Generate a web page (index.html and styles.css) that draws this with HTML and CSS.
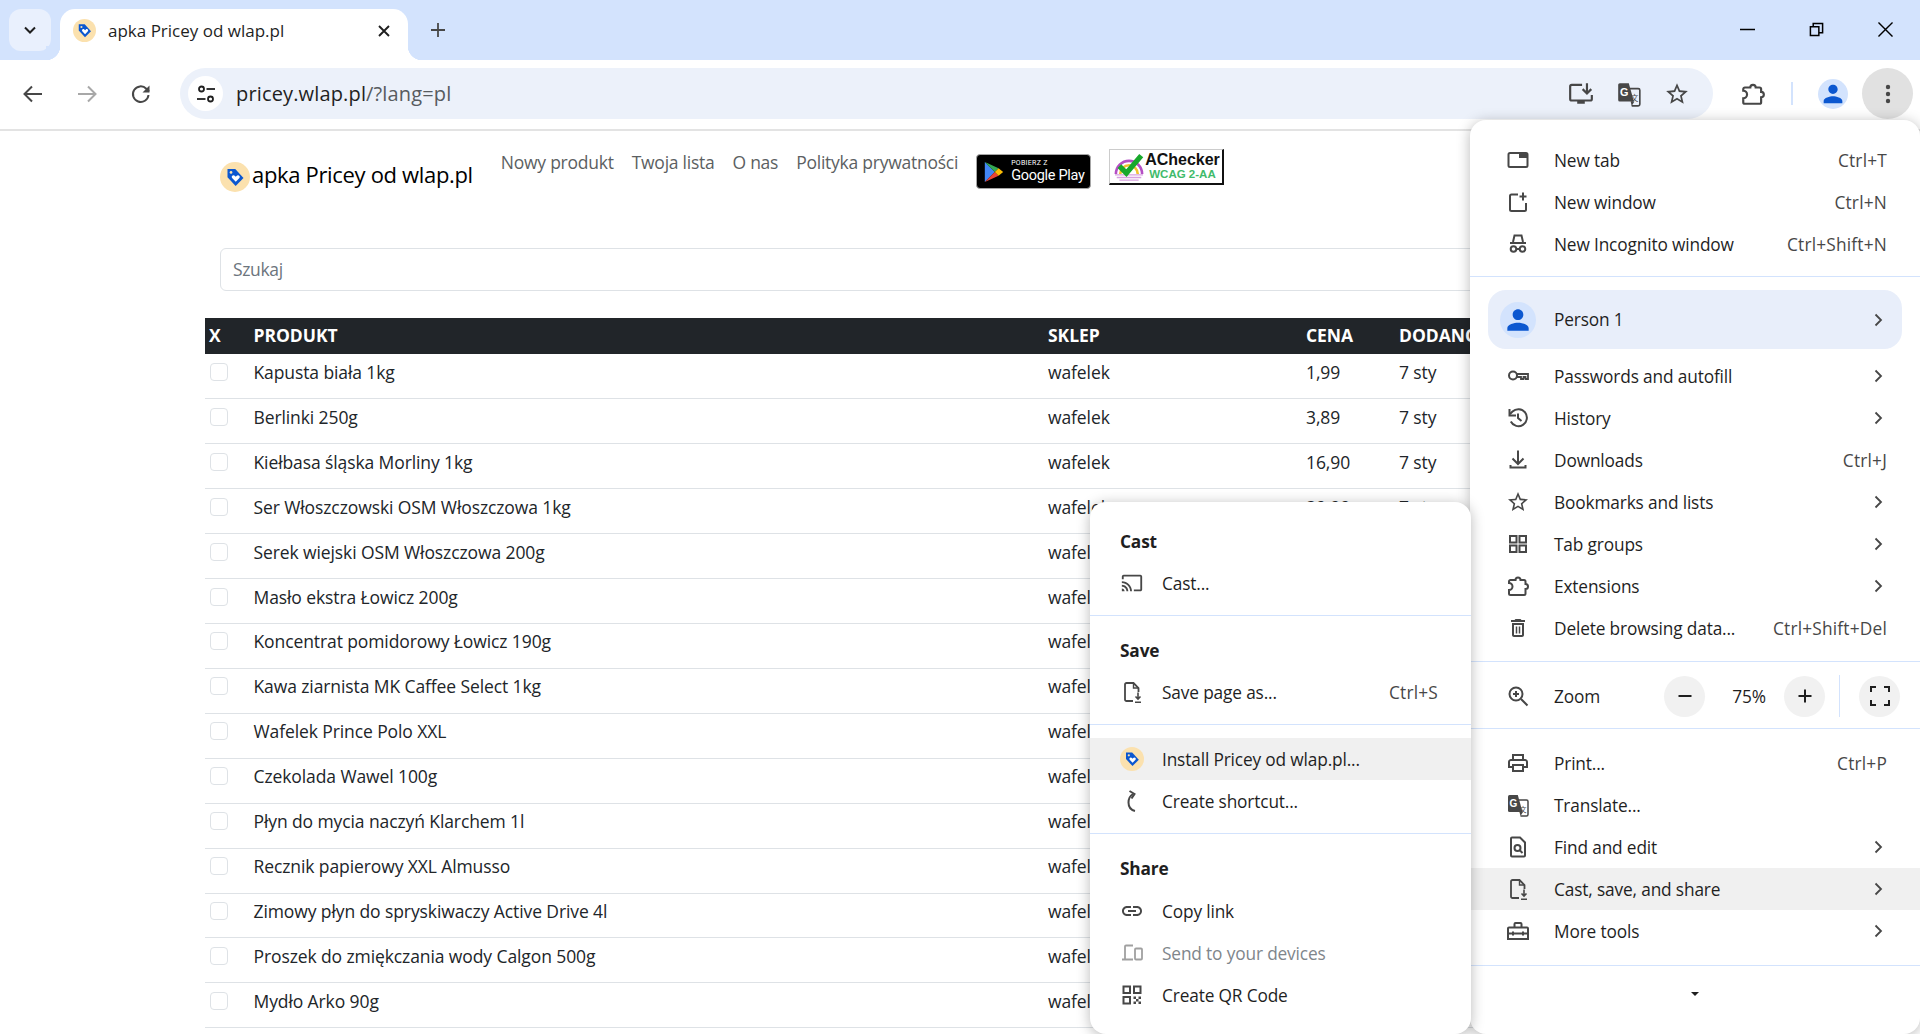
FILE: index.html
```html
<!DOCTYPE html>
<html lang="pl">
<head>
    <meta charset="UTF-8">
    <meta name="viewport" content="width=device-width, initial-scale=1.0">
    <title>apka Pricey od wlap.pl</title>
    <link rel="stylesheet" href="styles.css">
</head>
<body>
    <!-- Ikony -->
    <svg class="sprite" aria-hidden="true">
        <symbol id="i-favicon" viewBox="0 0 24 24">
            <circle cx="12" cy="12" r="12" fill="#fbe1ae"/>
            <path d="M6 5.500h6.200l6.600 7.200-6.300 6.400-6.500-7z" fill="#0b57d0"/>
            <circle cx="8.800" cy="8.300" r="1.100" fill="#fbe1ae"/>
            <path d="M12.600 15.800l-2.900-3c-1.200-1.500 1-3.100 2.300-1.700l.6.6.6-.6c1.300-1.400 3.500.2 2.300 1.700z" fill="#fff"/>
        </symbol>
        <symbol id="i-person" viewBox="0 0 24 24">
            <path d="M12 12c2.210 0 4-1.790 4-4s-1.790-4-4-4-4 1.790-4 4 1.790 4 4 4zm0 2c-2.670 0-8 1.340-8 4v2h16v-2c0-2.660-5.330-4-8-4z" fill="#0b57d0"/>
        </symbol>
        <symbol id="i-star" viewBox="0 0 24 24">
            <path d="M22 9.240l-7.190-.62L12 2 9.190 8.630 2 9.240l5.460 4.730L5.820 21 12 17.270 18.180 21l-1.630-7.030L22 9.240zM12 15.400l-3.760 2.270 1-4.280-3.320-2.880 4.380-.38L12 6.100l1.710 4.040 4.380.38-3.320 2.880 1 4.280L12 15.400z" fill="currentColor"/>
        </symbol>
        <symbol id="i-ext" viewBox="0 0 24 24">
            <path d="M4.500 6h5a2.500 2.500 0 0 1 5 0H18a1.500 1.500 0 0 1 1.500 1.500V10a2.500 2.500 0 0 1 0 5v4.500A1.500 1.500 0 0 1 18 21H4.500A1.500 1.500 0 0 1 3 19.500V16a3.500 3.500 0 0 0 0-7V7.500A1.500 1.500 0 0 1 4.500 6z" fill="none" stroke="currentColor" stroke-width="2"/>
        </symbol>
        <symbol id="i-save" viewBox="0 0 24 24">
            <path d="M13 21H6.500A1.500 1.500 0 0 1 5 19.500v-15A1.500 1.500 0 0 1 6.500 3h7l5 5v4" fill="none" stroke="currentColor" stroke-width="1.800"/>
            <path d="M13.500 3v5h5" fill="none" stroke="currentColor" stroke-width="1.400"/>
            <path d="M18 12.500v6M15.500 16.500l2.500 2.500 2.500-2.500M15 22.300h6" fill="none" stroke="currentColor" stroke-width="1.600"/>
        </symbol>
        <symbol id="i-chevron" viewBox="0 0 16 16">
            <path d="M5.500 2.500L11 8l-5.500 5.500" fill="none" stroke="#474747" stroke-width="1.800"/>
        </symbol>
    </svg>

    <div class="browser">
        <!-- Pasek kart -->
        <header class="tabstrip">
            <button class="tab-search">
                <svg class="icon-16" viewBox="0 0 16 16"><path d="M3 5.500l5 5 5-5" fill="none" stroke="#1f1f1f" stroke-width="2"/></svg>
            </button>
            <div class="tab">
                <svg class="tab-favicon"><use href="#i-favicon"/></svg>
                <span class="tab-title">apka Pricey od wlap.pl</span>
                <svg class="icon-16" viewBox="0 0 16 16"><path d="M3 3l10 10M13 3L3 13" fill="none" stroke="#1f1f1f" stroke-width="1.900"/></svg>
            </div>
            <svg class="new-tab" viewBox="0 0 16 16"><path d="M8 1v14M1 8h14" fill="none" stroke="#474747" stroke-width="1.800"/></svg>
            <div class="window-controls">
                <svg class="win-btn" viewBox="0 0 16 16"><path d="M0 8h16" stroke="#000" stroke-width="1.600"/></svg>
                <svg class="win-btn" viewBox="0 0 16 16"><path d="M1.500 5h9v9.500h-9zM4.500 5V1.500h10v10H10.500" fill="none" stroke="#000" stroke-width="1.600"/></svg>
                <svg class="win-btn" viewBox="0 0 16 16"><path d="M.5.5l15 15M15.500.5l-15 15" fill="none" stroke="#000" stroke-width="1.500"/></svg>
            </div>
        </header>

        <!-- Pasek adresu -->
        <nav class="toolbar">
            <div class="nav-buttons">
                <svg class="icon-24" viewBox="0 0 24 24"><path d="M21 12H4M11 4.500L3.500 12l7.500 7.500" fill="none" stroke="#474747" stroke-width="2"/></svg>
                <svg class="icon-24" viewBox="0 0 24 24"><path d="M3 12h17M13 4.500l7.500 7.500-7.500 7.500" fill="none" stroke="#a8a8a8" stroke-width="2"/></svg>
                <svg class="icon-24" viewBox="0 0 24 24"><path d="M19.500 13a7.800 7.800 0 1 1-2.200-6.300L20 9.500" fill="none" stroke="#474747" stroke-width="2"/><path d="M20.500 3.500v7h-7z" fill="#474747"/></svg>
            </div>
            <div class="omnibox">
                <span class="site-chip">
                    <svg class="icon-20" viewBox="0 0 20 20">
                        <g fill="none" stroke="#1f1f1f" stroke-width="1.800">
                            <circle cx="5.500" cy="5" r="2.500"/><path d="M10.500 5H19"/>
                            <circle cx="14.500" cy="15" r="2.500"/><path d="M1 15h8.500"/>
                        </g>
                    </svg>
                </span>
                <span class="url">pricey.wlap.pl<span class="url-rest">/?lang=pl</span></span>
                <div class="omni-icons">
                    <svg class="icon-26" viewBox="0 0 24 24">
                        <path d="M13 3.500H3.500A1.500 1.500 0 0 0 2 5v11.500A1.500 1.500 0 0 0 3.500 18h17a1.500 1.500 0 0 0 1.500-1.500V13" fill="none" stroke="#474747" stroke-width="2"/>
                        <path d="M8.500 18h7v3h-7z" fill="#474747"/>
                        <path d="M17.500 2v9M13.500 7.500l4 4 4-4" fill="none" stroke="#474747" stroke-width="2"/>
                    </svg>
                    <svg class="icon-26 icon-dark" viewBox="0 0 24 24">
                        <path d="M3.500 2h8.300l4.700 17H3.500A1.500 1.500 0 0 1 2 17.500v-14A1.500 1.500 0 0 1 3.500 2z" fill="currentColor"/>
                        <path d="M12 7h8.500A1.500 1.500 0 0 1 22 8.500v13a1.500 1.500 0 0 1-1.500 1.500H14.500" fill="none" stroke="currentColor" stroke-width="1.500"/>
                        <path d="M13.500 19l1 4 2.500-4z" fill="currentColor"/>
                        <text x="3.600" y="14" class="svg-g">G</text>
                        <text x="13.600" y="18.500" class="svg-cjk">文</text>
                    </svg>
                    <svg class="icon-26 icon-dark"><use href="#i-star"/></svg>
                </div>
            </div>
            <svg class="icon-26 icon-dark toolbar-ext"><use href="#i-ext"/></svg>
            <span class="toolbar-sep"></span>
            <span class="avatar"><svg class="avatar-person"><use href="#i-person"/></svg></span>
            <span class="kebab">
                <svg class="icon-24" viewBox="0 0 24 24"><g fill="#474747"><circle cx="12" cy="5" r="2.200"/><circle cx="12" cy="12" r="2.200"/><circle cx="12" cy="19" r="2.200"/></g></svg>
            </span>
        </nav>

        <!-- Strona -->
        <main class="page">
            <div class="page-header">
                <svg class="logo"><use href="#i-favicon"/></svg>
                <span class="brand">apka Pricey od wlap.pl</span>
                <a class="nav-link" href="#">Nowy produkt</a>
                <a class="nav-link" href="#">Twoja lista</a>
                <a class="nav-link" href="#">O nas</a>
                <a class="nav-link" href="#">Polityka prywatności</a>
                <a class="play-badge" href="#">
                    <svg class="play-icon" viewBox="0 0 24 26">
                        <path d="M1 1v24l12-12z" fill="#4285f4"/>
                        <path d="M1 1l12 12 4.500-4.500z" fill="#34a853"/>
                        <path d="M1 25l12-12 4.500 4.500z" fill="#ea4335"/>
                        <path d="M17.500 8.500L23 13l-5.500 4.500L13 13z" fill="#fbbc04"/>
                    </svg>
                    <span class="play-text">
                        <span class="play-small">POBIERZ Z</span>
                        <span class="play-big">Google Play</span>
                    </span>
                </a>
                <a class="checker-badge" href="#">
                    <svg class="checker-icon" viewBox="0 0 36 32">
                        <path d="M3 24a15 15 0 0 1 30 0" fill="none" stroke="#b44fc4" stroke-width="3"/>
                        <path d="M8 24a10 10 0 0 1 20 0" fill="none" stroke="#f2c230" stroke-width="3"/>
                        <path d="M2 25h32M4 28h28M7 31h22" stroke="#d8a0e0" stroke-width="1.500"/>
                        <path d="M7 15l8 8L32 3" fill="none" stroke="#18a82c" stroke-width="6"/>
                    </svg>
                    <span class="checker-text">
                        <span class="checker-name">AChecker</span>
                        <span class="checker-level">WCAG 2-AA</span>
                    </span>
                </a>
            </div>

            <input class="search" type="text" placeholder="Szukaj">

            <table class="products">
                <colgroup>
                    <col class="col-x"><col class="col-name"><col class="col-shop"><col class="col-price"><col class="col-date">
                </colgroup>
                <thead>
                    <tr><th>X</th><th>PRODUKT</th><th>SKLEP</th><th>CENA</th><th>DODANO</th></tr>
                </thead>
                <tbody>
                    <tr><td><span class="check"></span></td><td>Kapusta biała 1kg</td><td>wafelek</td><td>1,99</td><td>7 sty</td></tr>
                    <tr><td><span class="check"></span></td><td>Berlinki 250g</td><td>wafelek</td><td>3,89</td><td>7 sty</td></tr>
                    <tr><td><span class="check"></span></td><td>Kiełbasa śląska Morliny 1kg</td><td>wafelek</td><td>16,90</td><td>7 sty</td></tr>
                    <tr><td><span class="check"></span></td><td>Ser Włoszczowski OSM Włoszczowa 1kg</td><td>wafelek</td><td>39,99</td><td>7 sty</td></tr>
                    <tr><td><span class="check"></span></td><td>Serek wiejski OSM Włoszczowa 200g</td><td>wafelek</td><td>2,49</td><td>7 sty</td></tr>
                    <tr><td><span class="check"></span></td><td>Masło ekstra Łowicz 200g</td><td>wafelek</td><td>6,99</td><td>7 sty</td></tr>
                    <tr><td><span class="check"></span></td><td>Koncentrat pomidorowy Łowicz 190g</td><td>wafelek</td><td>4,49</td><td>7 sty</td></tr>
                    <tr><td><span class="check"></span></td><td>Kawa ziarnista MK Caffee Select 1kg</td><td>wafelek</td><td>59,99</td><td>7 sty</td></tr>
                    <tr><td><span class="check"></span></td><td>Wafelek Prince Polo XXL</td><td>wafelek</td><td>1,49</td><td>7 sty</td></tr>
                    <tr><td><span class="check"></span></td><td>Czekolada Wawel 100g</td><td>wafelek</td><td>4,29</td><td>7 sty</td></tr>
                    <tr><td><span class="check"></span></td><td>Płyn do mycia naczyń Klarchem 1l</td><td>wafelek</td><td>5,99</td><td>7 sty</td></tr>
                    <tr><td><span class="check"></span></td><td>Recznik papierowy XXL Almusso</td><td>wafelek</td><td>7,99</td><td>7 sty</td></tr>
                    <tr><td><span class="check"></span></td><td>Zimowy płyn do spryskiwaczy Active Drive 4l</td><td>wafelek</td><td>19,99</td><td>7 sty</td></tr>
                    <tr><td><span class="check"></span></td><td>Proszek do zmiękczania wody Calgon 500g</td><td>wafelek</td><td>12,99</td><td>7 sty</td></tr>
                    <tr><td><span class="check"></span></td><td>Mydło Arko 90g</td><td>wafelek</td><td>2,99</td><td>7 sty</td></tr>
                </tbody>
            </table>
        </main>
    </div>

    <!-- Menu Chrome -->
    <div class="menu main-menu">
        <div class="menu-item">
            <svg class="menu-icon" viewBox="0 0 24 24"><rect x="2.500" y="5" width="19" height="14" rx="1.500" fill="none" stroke="currentColor" stroke-width="2"/><path d="M13 5h8.500v5H13z" fill="currentColor"/></svg>
            <span class="menu-label">New tab</span><span class="accel">Ctrl+T</span>
        </div>
        <div class="menu-item">
            <svg class="menu-icon" viewBox="0 0 24 24"><path d="M12 4.500H5.500A1.500 1.500 0 0 0 4 6v13.500A1.500 1.500 0 0 0 5.500 21h13a1.500 1.500 0 0 0 1.500-1.500V13" fill="none" stroke="currentColor" stroke-width="2"/><path d="M17 2.500v8M13.500 6.500h7" fill="none" stroke="currentColor" stroke-width="2"/></svg>
            <span class="menu-label">New window</span><span class="accel">Ctrl+N</span>
        </div>
        <div class="menu-item">
            <svg class="menu-icon" viewBox="0 0 24 24"><path d="M7 10l1.500-6.500h7L17 10M4 11h16" fill="none" stroke="currentColor" stroke-width="2"/><circle cx="7.500" cy="17" r="2.800" fill="none" stroke="currentColor" stroke-width="2"/><circle cx="16.500" cy="17" r="2.800" fill="none" stroke="currentColor" stroke-width="2"/><path d="M10.500 17h3" stroke="currentColor" stroke-width="2"/></svg>
            <span class="menu-label">New Incognito window</span><span class="accel">Ctrl+Shift+N</span>
        </div>
        <div class="menu-sep sep-first"></div>
        <div class="person-pill">
            <span class="person-avatar"><svg class="person-large"><use href="#i-person"/></svg></span>
            <span class="menu-label">Person 1</span>
            <svg class="chevron"><use href="#i-chevron"/></svg>
        </div>
        <div class="menu-item item-after-person">
            <svg class="menu-icon" viewBox="0 0 24 24"><circle cx="7" cy="11.500" r="4" fill="none" stroke="currentColor" stroke-width="2"/><path d="M11 10h11v5h-2.500v-2h-2v2H15v-2h-4" fill="none" stroke="currentColor" stroke-width="1.800"/></svg>
            <span class="menu-label">Passwords and autofill</span>
            <svg class="chevron"><use href="#i-chevron"/></svg>
        </div>
        <div class="menu-item">
            <svg class="menu-icon" viewBox="0 0 24 24"><path d="M4.800 15.500A8.500 8.500 0 1 0 6.500 5.500L4 8" fill="none" stroke="currentColor" stroke-width="2"/><path d="M3.500 3v6.500H10" fill="none" stroke="currentColor" stroke-width="2"/><path d="M12 7.500V12l3.500 3" fill="none" stroke="currentColor" stroke-width="2"/></svg>
            <span class="menu-label">History</span>
            <svg class="chevron"><use href="#i-chevron"/></svg>
        </div>
        <div class="menu-item">
            <svg class="menu-icon" viewBox="0 0 24 24"><path d="M12 2.500v13M6.500 10.500l5.500 5.500 5.500-5.500" fill="none" stroke="currentColor" stroke-width="2"/><path d="M4.500 17v2.500h15V17" fill="none" stroke="currentColor" stroke-width="2"/></svg>
            <span class="menu-label">Downloads</span><span class="accel">Ctrl+J</span>
        </div>
        <div class="menu-item">
            <svg class="menu-icon"><use href="#i-star"/></svg>
            <span class="menu-label">Bookmarks and lists</span>
            <svg class="chevron"><use href="#i-chevron"/></svg>
        </div>
        <div class="menu-item">
            <svg class="menu-icon" viewBox="0 0 24 24"><g fill="none" stroke="currentColor" stroke-width="2"><rect x="4" y="4" width="6.500" height="6.500"/><rect x="13.500" y="4" width="6.500" height="6.500"/><rect x="4" y="13.500" width="6.500" height="6.500"/><rect x="13.500" y="13.500" width="6.500" height="6.500"/></g></svg>
            <span class="menu-label">Tab groups</span>
            <svg class="chevron"><use href="#i-chevron"/></svg>
        </div>
        <div class="menu-item">
            <svg class="menu-icon"><use href="#i-ext"/></svg>
            <span class="menu-label">Extensions</span>
            <svg class="chevron"><use href="#i-chevron"/></svg>
        </div>
        <div class="menu-item">
            <svg class="menu-icon" viewBox="0 0 24 24"><path d="M6 19c0 1.100.9 2 2 2h8c1.100 0 2-.9 2-2V7H6v12zM8 9h8v10H8V9zm7.500-5l-1-1h-5l-1 1H5v2h14V4z" fill="currentColor"/><path d="M10.500 10.500v7M13.500 10.500v7" stroke="currentColor" stroke-width="1.500"/></svg>
            <span class="menu-label">Delete browsing data...</span><span class="accel">Ctrl+Shift+Del</span>
        </div>
        <div class="menu-sep sep-zoom"></div>
        <div class="zoom-row">
            <svg class="menu-icon" viewBox="0 0 24 24"><circle cx="10" cy="10" r="6.500" fill="none" stroke="currentColor" stroke-width="2"/><path d="M15 15l6.500 6.500M10 7v6M7 10h6" fill="none" stroke="currentColor" stroke-width="2"/></svg>
            <span class="menu-label">Zoom</span>
            <span class="zoom-btn"><svg class="icon-16" viewBox="0 0 16 16"><path d="M1.500 8h13" stroke="#1f1f1f" stroke-width="2"/></svg></span>
            <span class="zoom-value">75%</span>
            <span class="zoom-btn"><svg class="icon-16" viewBox="0 0 16 16"><path d="M1.500 8h13M8 1.500v13" stroke="#1f1f1f" stroke-width="2"/></svg></span>
            <span class="zoom-sep"></span>
            <span class="zoom-btn"><svg class="icon-20" viewBox="0 0 20 20"><path d="M1 6V1h5M14 1h5v5M19 14v5h-5M6 19H1v-5" fill="none" stroke="#1f1f1f" stroke-width="2"/></svg></span>
        </div>
        <div class="menu-sep sep-print"></div>
        <div class="menu-item">
            <svg class="menu-icon" viewBox="0 0 24 24"><path d="M19 8h-1V3H6v5H5c-1.660 0-3 1.340-3 3v6h4v4h12v-4h4v-6c0-1.660-1.340-3-3-3zM8 5h8v3H8V5zm8 12v2H8v-4h8v2zm2-2v-2H6v2H4v-4c0-.55.45-1 1-1h14c.55 0 1 .45 1 1v4h-2z" fill="currentColor"/></svg>
            <span class="menu-label">Print...</span><span class="accel">Ctrl+P</span>
        </div>
        <div class="menu-item">
            <svg class="menu-icon" viewBox="0 0 24 24">
                <path d="M3.500 2h8.300l4.700 17H3.500A1.500 1.500 0 0 1 2 17.500v-14A1.500 1.500 0 0 1 3.500 2z" fill="currentColor"/>
                <path d="M12 7h8.500A1.500 1.500 0 0 1 22 8.500v13a1.500 1.500 0 0 1-1.500 1.500H14.500" fill="none" stroke="currentColor" stroke-width="1.500"/>
                <path d="M13.500 19l1 4 2.500-4z" fill="currentColor"/>
                <text x="3.600" y="14" class="svg-g">G</text>
                <text x="13.600" y="18.500" class="svg-cjk">文</text>
            </svg>
            <span class="menu-label">Translate...</span>
        </div>
        <div class="menu-item">
            <svg class="menu-icon" viewBox="0 0 24 24"><path d="M6 2.500h8l5 5v13a1 1 0 0 1-1 1H6a1 1 0 0 1-1-1v-17a1 1 0 0 1 1-1z" fill="none" stroke="currentColor" stroke-width="2"/><circle cx="11.500" cy="13" r="3" fill="none" stroke="currentColor" stroke-width="2"/><path d="M13.500 15l3 3" stroke="currentColor" stroke-width="2"/></svg>
            <span class="menu-label">Find and edit</span>
            <svg class="chevron"><use href="#i-chevron"/></svg>
        </div>
        <div class="menu-item is-active">
            <svg class="menu-icon"><use href="#i-save"/></svg>
            <span class="menu-label">Cast, save, and share</span>
            <svg class="chevron"><use href="#i-chevron"/></svg>
        </div>
        <div class="menu-item">
            <svg class="menu-icon" viewBox="0 0 24 24"><path d="M3 8.500h18a1 1 0 0 1 1 1V20H2V9.500a1 1 0 0 1 1-1zM8.500 8V5a1 1 0 0 1 1-1h5a1 1 0 0 1 1 1v3M2 14.500h20M7 12.500v4M17 12.500v4" fill="none" stroke="currentColor" stroke-width="2"/></svg>
            <span class="menu-label">More tools</span>
            <svg class="chevron"><use href="#i-chevron"/></svg>
        </div>
        <div class="menu-sep sep-more"></div>
        <div class="menu-more"><span class="caret"></span></div>
    </div>

    <div class="menu sub-menu">
        <div class="menu-heading">Cast</div>
        <div class="menu-item">
            <svg class="menu-icon" viewBox="-1 -1 26 26"><path d="M21 3H3c-1.100 0-2 .9-2 2v3h2V5h18v14h-7v2h7c1.100 0 2-.9 2-2V5c0-1.100-.9-2-2-2zM1 18v3h3c0-1.660-1.340-3-3-3zm0-4v2c2.760 0 5 2.240 5 5h2c0-3.870-3.130-7-7-7zm0-4v2c4.970 0 9 4.030 9 9h2c0-6.080-4.930-11-11-11z" fill="currentColor"/></svg>
            <span class="menu-label">Cast...</span>
        </div>
        <div class="menu-sep sep-a"></div>
        <div class="menu-heading">Save</div>
        <div class="menu-item">
            <svg class="menu-icon"><use href="#i-save"/></svg>
            <span class="menu-label">Save page as...</span><span class="accel">Ctrl+S</span>
        </div>
        <div class="menu-sep sep-a"></div>
        <div class="menu-item is-active item-install">
            <svg class="menu-icon"><use href="#i-favicon"/></svg>
            <span class="menu-label">Install Pricey od wlap.pl...</span>
        </div>
        <div class="menu-item">
            <svg class="menu-icon" viewBox="0 0 24 24"><path d="M15 22c-4-1-6.500-4.500-6.500-8.500S10.500 6.500 13 5" fill="none" stroke="currentColor" stroke-width="2"/><path d="M9.500 2l5 3-3 4.500" fill="none" stroke="currentColor" stroke-width="2"/></svg>
            <span class="menu-label">Create shortcut...</span>
        </div>
        <div class="menu-sep sep-a"></div>
        <div class="menu-heading heading-share">Share</div>
        <div class="menu-item">
            <svg class="menu-icon" viewBox="0 0 24 24"><path d="M3.900 12c0-1.710 1.390-3.100 3.100-3.100h4V7H7c-2.760 0-5 2.240-5 5s2.240 5 5 5h4v-1.900H7c-1.710 0-3.100-1.390-3.100-3.100zM8 13h8v-2H8v2zm9-6h-4v1.900h4c1.710 0 3.100 1.390 3.100 3.100s-1.390 3.100-3.100 3.100h-4V17h4c2.760 0 5-2.240 5-5s-2.240-5-5-5z" fill="currentColor"/></svg>
            <span class="menu-label">Copy link</span>
        </div>
        <div class="menu-item is-muted">
            <svg class="menu-icon" viewBox="0 0 24 24"><path d="M13 4.500H6a1 1 0 0 0-1 1V18M2 18.500h11" fill="none" stroke="currentColor" stroke-width="1.800"/><rect x="15" y="7.500" width="7" height="11" rx="1" fill="none" stroke="currentColor" stroke-width="1.800"/></svg>
            <span class="menu-label">Send to your devices</span>
        </div>
        <div class="menu-item">
            <svg class="menu-icon" viewBox="0 0 24 24"><g fill="none" stroke="currentColor" stroke-width="2"><rect x="3.500" y="3.500" width="6.500" height="6.500"/><rect x="14" y="3.500" width="6.500" height="6.500"/><rect x="3.500" y="14" width="6.500" height="6.500"/></g><path d="M13.500 13.500h2.500V16h-2.500zM18.500 13.500H21V16h-2.500zM16 16h2.500v2.500H16zM13.500 18.500H16V21h-2.500zM18.500 18.500H21V21h-2.500z" fill="currentColor"/></svg>
            <span class="menu-label">Create QR Code</span>
        </div>
    </div>
</body>
</html>
```

FILE: styles.css
```css
* {
    box-sizing: border-box;
    margin: 0;
    padding: 0;
}

body {
    font-family: "Open Sans", "Noto Sans", sans-serif;
    color: #1f1f1f;
    background: #fff;
    height: 100vh;
    overflow: hidden;
    position: relative;
}

a {
    text-decoration: none;
}

svg {
    display: block;
    flex: none;
}

.sprite {
    width: 0;
    height: 0;
    position: absolute;
}

.svg-g {
    font: 700 10px "Liberation Sans", sans-serif;
    fill: #fff;
}

.svg-cjk {
    font: 7px "Noto Sans CJK SC", sans-serif;
    fill: currentColor;
}

.icon-16 { width: 16px; height: 16px; }
.icon-20 { width: 20px; height: 20px; }
.icon-24 { width: 24px; height: 24px; }
.icon-26 { width: 26px; height: 26px; }
.icon-dark { color: #474747; }

.browser {
    height: 100%;
    display: flex;
    flex-direction: column;
}

/* Pasek kart */
.tabstrip {
    height: 60px;
    flex: none;
    background: #d3e3fd;
    display: flex;
    align-items: flex-start;
    padding: 9px 0 0 9px;
}

.tab-search {
    width: 42px;
    height: 42px;
    border: none;
    border-radius: 12px;
    background: #e9f0fd;
    display: flex;
    align-items: center;
    justify-content: center;
}

.tab {
    width: 348px;
    height: 51px;
    margin-left: 9px;
    background: #fff;
    border-radius: 15px 15px 0 0;
    display: flex;
    align-items: center;
    padding: 0 16px 8px 13px;
    position: relative;
}

.tab::before,
.tab::after {
    content: "";
    position: absolute;
    bottom: 0;
    width: 14px;
    height: 14px;
}

.tab::before {
    left: -14px;
    background: radial-gradient(circle at 0 0, #d3e3fd 14px, #fff 14.5px);
}

.tab::after {
    right: -14px;
    background: radial-gradient(circle at 100% 0, #d3e3fd 14px, #fff 14.5px);
}

.tab-favicon {
    width: 23px;
    height: 23px;
}

.tab-title {
    flex: 1;
    margin-left: 12px;
    font-size: 17px;
    color: #1f1f1f;
}

.new-tab {
    width: 16px;
    height: 16px;
    margin: 13px 0 0 22px;
}

.window-controls {
    margin-left: auto;
    display: flex;
    gap: 54px;
    padding: 13px 27px 0 0;
}

.win-btn {
    width: 15px;
    height: 15px;
}

/* Pasek adresu */
.toolbar {
    height: 71px;
    flex: none;
    background: #fff;
    border-bottom: 2px solid #e3e3e3;
    border-radius: 14px 14px 0 0;
    display: flex;
    align-items: center;
    padding: 0 7px 2px 21px;
    position: relative;
}

.nav-buttons {
    display: flex;
    gap: 30px;
}

.omnibox {
    width: 1533px;
    height: 51px;
    margin-left: 27px;
    background: #ecf1fa;
    border-radius: 26px;
    display: flex;
    align-items: center;
    padding: 0 23px 0 8px;
}

.site-chip {
    width: 35px;
    height: 35px;
    background: #fff;
    border-radius: 50%;
    display: flex;
    align-items: center;
    justify-content: center;
}

.url {
    margin-left: 13px;
    font-size: 20px;
    letter-spacing: 0.15px;
    color: #1f1f1f;
}

.url-rest {
    color: #575b5f;
}

.omni-icons {
    margin-left: auto;
    display: flex;
    gap: 22px;
}

.toolbar-ext {
    margin-left: 27px;
}

.toolbar-sep {
    width: 2px;
    height: 23px;
    margin-left: 25px;
    background: #d3e3fd;
}

.avatar {
    width: 30px;
    height: 30px;
    margin-left: 25px;
    border-radius: 50%;
    background: #d3e3fd;
    display: flex;
    align-items: center;
    justify-content: center;
}

.avatar-person {
    width: 28px;
    height: 28px;
}

.kebab {
    width: 51px;
    height: 51px;
    margin-left: 14px;
    border-radius: 50%;
    background: #e1e1e1;
    display: flex;
    align-items: center;
    justify-content: center;
}

/* Strona */
.page {
    flex: 1;
    padding-left: 205px;
    overflow: hidden;
}

.page-header {
    height: 117px;
    padding-left: 15px;
    display: flex;
    align-items: flex-start;
}

.logo {
    width: 30px;
    height: 30px;
    margin-top: 31px;
}

.brand {
    margin: 28px 28px 0 2px;
    font-size: 22px;
    line-height: 30px;
    letter-spacing: -0.33px;
    color: #000;
}

.nav-link {
    margin: 19px 18px 0 0;
    font-size: 17.500px;
    line-height: 24px;
    letter-spacing: -0.25px;
    color: #5c5f62;
}

.play-badge {
    width: 115px;
    height: 35px;
    margin-top: 23px;
    background: #000;
    border: 1px solid #a6a6a6;
    border-radius: 4px;
    display: flex;
    align-items: center;
    padding-left: 7px;
    color: #fff;
}

.play-icon {
    width: 20px;
    height: 24px;
}

.play-text {
    margin-left: 7px;
    display: flex;
    flex-direction: column;
    font-family: Roboto, sans-serif;
}

.play-small {
    font-size: 7px;
    line-height: 8px;
    letter-spacing: 0.3px;
}

.play-big {
    font-size: 14.500px;
    line-height: 17px;
    letter-spacing: -0.3px;
}

.checker-badge {
    width: 115px;
    height: 36px;
    margin: 18px 0 0 18px;
    background: #fff;
    border: 1px solid #ccc;
    border-right: 2px solid #111;
    border-bottom: 2px solid #111;
    display: flex;
    align-items: center;
    padding-left: 3px;
}

.checker-icon {
    width: 32px;
    height: 28px;
}

.checker-text {
    display: flex;
    flex-direction: column;
    align-items: center;
    font-family: "Liberation Sans", sans-serif;
    font-weight: 700;
}

.checker-name {
    font-size: 16px;
    line-height: 16px;
    color: #111;
}

.checker-level {
    font-size: 11.500px;
    line-height: 13px;
    color: #3fbb6b;
}

.search {
    display: block;
    width: 1480px;
    height: 43px;
    margin-left: 15px;
    padding: 0 12px 2px;
    border: 1px solid #dee2e6;
    border-radius: 6px;
    font-family: inherit;
    font-size: 17.500px;
    letter-spacing: -0.35px;
    outline: none;
}

.search::placeholder {
    color: #6c757d;
    opacity: 1;
}

.products {
    width: 1510px;
    margin-top: 27px;
    border-collapse: collapse;
    table-layout: fixed;
}

.col-x { width: 44.500px; }
.col-name { width: 794.500px; }
.col-shop { width: 258px; }
.col-price { width: 93px; }
.col-date { width: 320px; }

.products th {
    height: 36px;
    padding: 0 4px 3px;
    background: #212529;
    color: #fff;
    text-align: left;
    font-size: 17.500px;
    letter-spacing: -0.05px;
    font-weight: 700;
    white-space: nowrap;
}

.products td {
    height: 44.930px;
    padding: 0 4px 9px;
    border-bottom: 1px solid #dee2e6;
    font-size: 17.500px;
    letter-spacing: -0.1px;
    color: #212529;
    white-space: nowrap;
}

.check {
    display: block;
    width: 18px;
    height: 18px;
    margin-left: 1px;
    border: 1px solid #dee2e6;
    border-radius: 4px;
}

/* Menu */
.menu {
    position: absolute;
    bottom: 0;
    background: #fff;
    border-radius: 16px;
    box-shadow: 0 2px 14px rgba(0, 0, 0, 0.28);
    font-size: 17.300px;
    letter-spacing: -0.15px;
}

.main-menu {
    top: 120px;
    left: 1470px;
    width: 450px;
    padding-top: 19px;
}

.sub-menu {
    top: 502px;
    left: 1090px;
    width: 381px;
    padding-top: 18px;
}

.menu-item {
    height: 42px;
    display: flex;
    align-items: center;
    padding: 0 33px 0 36px;
}

.sub-menu .menu-item {
    padding-left: 30px;
}

.menu-icon {
    width: 24px;
    height: 24px;
    color: #474747;
}

.menu-label {
    margin-left: 24px;
    flex: 1;
    white-space: nowrap;
}

.sub-menu .menu-label {
    margin-left: 18px;
}

.accel {
    color: #474747;
    letter-spacing: 0.2px;
}

.chevron {
    width: 16px;
    height: 16px;
    margin-right: 1px;
}

.is-active {
    background: #f0f0f0;
}

.is-muted {
    color: #80868b;
}

.is-muted .menu-icon {
    color: #a0a0a0;
}

.menu-sep {
    height: 1px;
    background: #d3e3fd;
}

.sep-first { margin-top: 11px; }
.sep-zoom { margin-top: 12px; }
.sep-print { margin-top: 11px; margin-bottom: 13px; }
.sep-more { margin-top: 13px; }
.sep-a { margin-top: 11px; margin-bottom: 13px; }

.person-pill {
    height: 59px;
    margin: 13px 18px 0;
    background: #e8eefa;
    border-radius: 18px;
    display: flex;
    align-items: center;
    padding: 0 15px 0 12px;
}

.person-pill .menu-label {
    margin-left: 18px;
}

.person-avatar {
    width: 36px;
    height: 36px;
    border-radius: 50%;
    background: #d3e3fd;
    display: flex;
    align-items: center;
    justify-content: center;
}

.person-large {
    width: 32px;
    height: 32px;
}

.item-after-person {
    margin-top: 6px;
}

.zoom-row {
    height: 42px;
    margin-top: 13px;
    display: flex;
    align-items: center;
    padding: 0 20px 0 36px;
}

.zoom-row .menu-label {
    flex: none;
    width: 110px;
}

.zoom-btn {
    width: 41px;
    height: 41px;
    border-radius: 50%;
    background: #f1f1f1;
    display: flex;
    align-items: center;
    justify-content: center;
}

.zoom-value {
    width: 79px;
    padding-left: 9px;
    text-align: center;
}

.zoom-sep {
    width: 1px;
    height: 42px;
    margin: 0 19px 0 14px;
    background: #d3e3fd;
}

.menu-more {
    padding-top: 26px;
    display: flex;
    justify-content: center;
}

.caret {
    width: 0;
    height: 0;
    border-left: 4px solid transparent;
    border-right: 4px solid transparent;
    border-top: 4px solid #1f1f1f;
}

.menu-heading {
    height: 42px;
    padding-left: 30px;
    display: flex;
    align-items: center;
    font-weight: 700;
}

.heading-share {
    margin-bottom: 1px;
}
```
